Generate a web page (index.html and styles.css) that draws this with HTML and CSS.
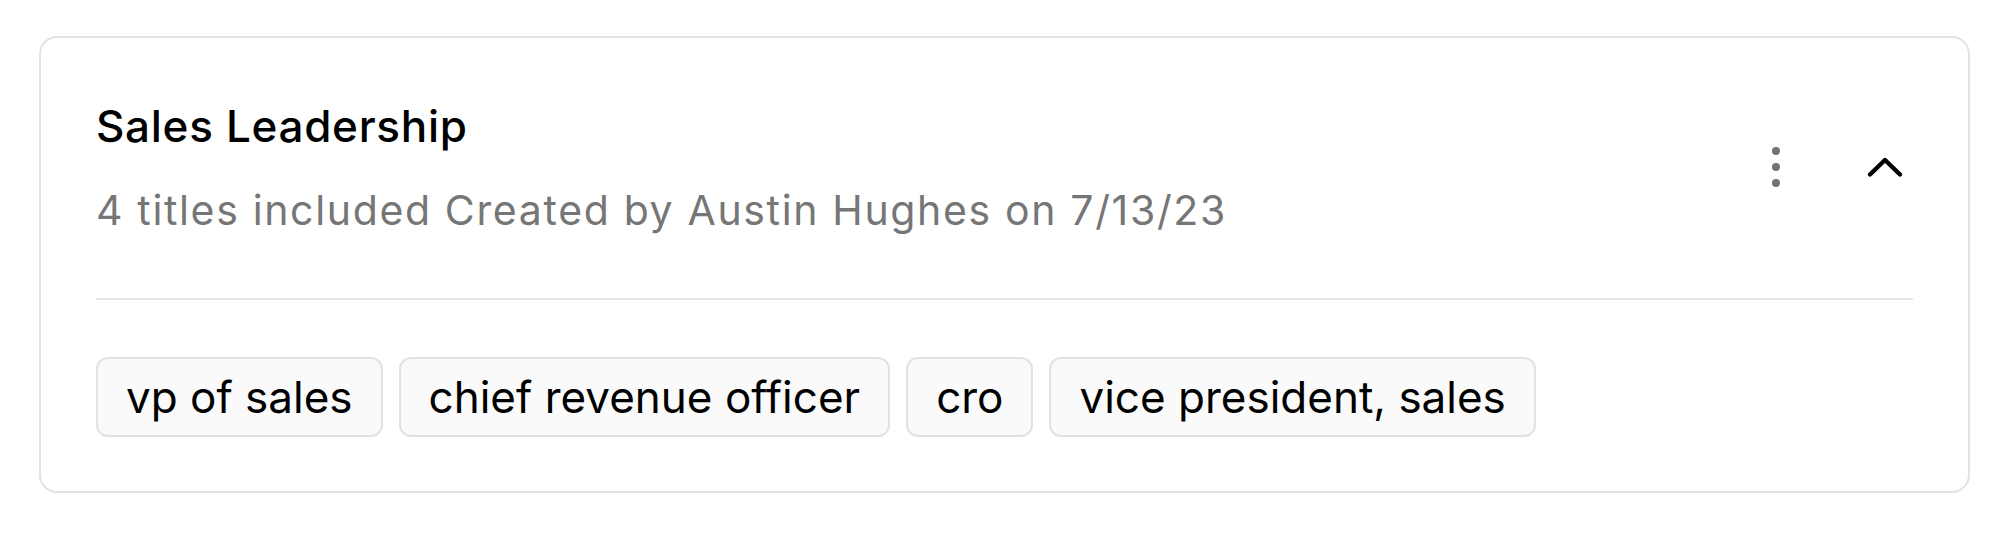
FILE: index.html
```html
<!DOCTYPE html>
<html lang="en">
<head>
<meta charset="utf-8">
<title>Sales Leadership</title>
<link rel="stylesheet" href="styles.css">
</head>
<body>
  <section class="card">
    <header class="card-header">
      <div class="heading">
        <h2 class="title">Sales Leadership</h2>
        <p class="meta">4 titles included Created by Austin Hughes on 7/13/23</p>
      </div>
      <div class="actions">
        <button class="icon-btn" aria-label="More options">
          <svg width="12" height="44" viewBox="0 0 12 44">
            <circle cx="6" cy="6" r="4" fill="#737373"/>
            <circle cx="6" cy="22" r="4" fill="#737373"/>
            <circle cx="6" cy="38" r="4" fill="#737373"/>
          </svg>
        </button>
        <button class="icon-btn" aria-label="Collapse">
          <svg width="40" height="24" viewBox="0 0 40 24">
            <path d="M5 19.5 L20 5 L35 19.5" fill="none" stroke="#000" stroke-width="4.4" stroke-linecap="round" stroke-linejoin="round"/>
          </svg>
        </button>
      </div>
    </header>
    <hr class="divider">
    <ul class="tags">
      <li class="tag">vp of sales</li>
      <li class="tag">chief revenue officer</li>
      <li class="tag">cro</li>
      <li class="tag">vice president, sales</li>
    </ul>
  </section>
</body>
</html>
```
FILE: styles.css
```css
* { box-sizing: border-box; }

html, body {
  margin: 0;
  background: #ffffff;
}

body {
  padding: 36px 30px 0 39px;
  font-family: "Inter", "Liberation Sans", Arial, sans-serif;
}

.card {
  border: 2px solid #e3e3e3;
  border-radius: 18px;
  padding: 60px 55px 54px 55px;
  background: #fff;
}

.card-header {
  display: flex;
  align-items: center;
  justify-content: space-between;
}

.heading {
  display: flex;
  flex-direction: column;
}

.title {
  margin: 0;
  font-size: 44px;
  line-height: 56px;
  font-weight: 500;
  letter-spacing: 0.7px;
  color: #000;
}

.meta {
  margin: 30px 0 0;
  font-size: 41px;
  line-height: 52px;
  font-weight: 400;
  letter-spacing: 1.65px;
  color: #767676;
}

.actions {
  display: flex;
  align-items: center;
  gap: 53px;
}

.icon-btn {
  width: 56px;
  height: 56px;
  padding: 0;
  border: 0;
  background: transparent;
  display: flex;
  align-items: center;
  justify-content: center;
}

.divider {
  margin: 62px 0 57px;
  border: 0;
  height: 2px;
  background: #e5e5e5;
}

.tags {
  list-style: none;
  margin: 0;
  padding: 0;
  display: flex;
  flex-wrap: wrap;
  gap: 16px;
}

.tag {
  border: 2px solid #e2e2e2;
  border-radius: 12px;
  background: #fafafa;
  padding: 12px 28px;
  font-size: 44px;
  line-height: 52px;
  color: #000;
}
```
